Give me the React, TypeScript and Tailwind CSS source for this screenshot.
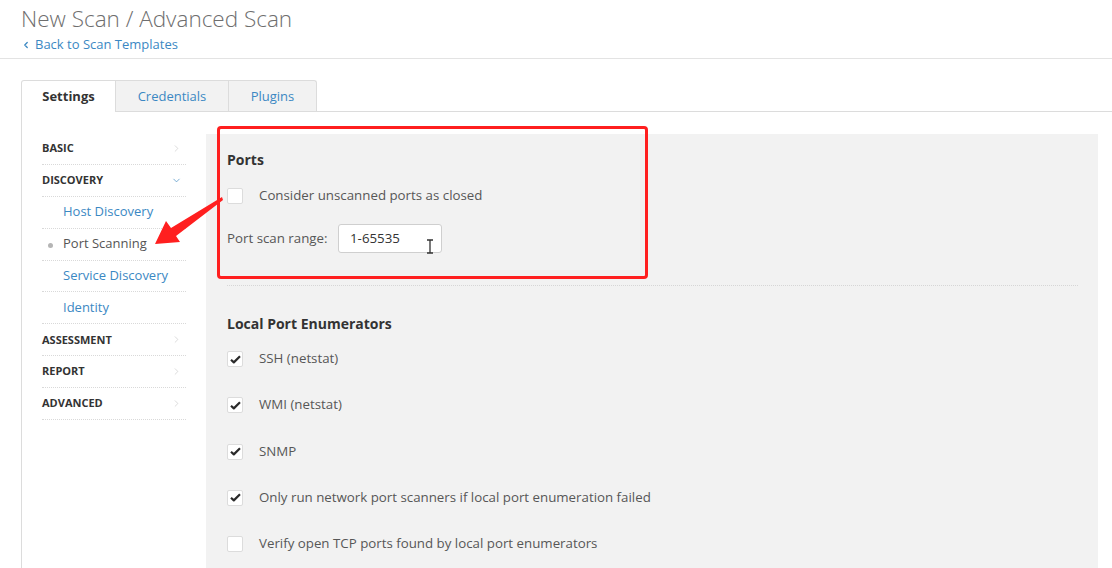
import { ChevronRight, ChevronDown, ChevronLeft } from "lucide-react";

type NavItem = {
  label: string;
  kind: "section" | "sub";
  open?: boolean;
  active?: boolean;
};

const navItems: NavItem[] = [
  { label: "Basic", kind: "section" },
  { label: "Discovery", kind: "section", open: true },
  { label: "Host Discovery", kind: "sub" },
  { label: "Port Scanning", kind: "sub", active: true },
  { label: "Service Discovery", kind: "sub" },
  { label: "Identity", kind: "sub" },
  { label: "Assessment", kind: "section" },
  { label: "Report", kind: "section" },
  { label: "Advanced", kind: "section" },
];

const enumerators = [
  { label: "SSH (netstat)", checked: true },
  { label: "WMI (netstat)", checked: true },
  { label: "SNMP", checked: true },
  { label: "Only run network port scanners if local port enumeration failed", checked: true },
  { label: "Verify open TCP ports found by local port enumerators", checked: false },
];

const Checkbox = ({ checked }: { checked: boolean }) => (
  <span className="flex h-[16px] w-[16px] shrink-0 items-center justify-center rounded-[2px] border border-[#dcdcdc] bg-white">
    {checked && (
      <svg width="11" height="9" viewBox="0 0 11 9">
        <path d="M1 4.8 L3.8 7.4 L10 1.2" fill="none" stroke="#2b2b2b" strokeWidth="2.2" strokeLinejoin="round" />
      </svg>
    )}
  </span>
);

const SideNav = () => (
  <div className="w-[144px] shrink-0">
    {navItems.map((item) =>
      item.kind === "section" ? (
        <div
          key={item.label}
          className="flex h-[31.9px] items-center justify-between border-b border-dotted border-[#d9d9d9] pr-[4px]"
        >
          <span className="text-[11px] font-bold uppercase text-[#333]">{item.label}</span>
          {item.open ? (
            <ChevronDown size={11} strokeWidth={1.6} className="text-[#4a90c4]" />
          ) : (
            <ChevronRight size={11} strokeWidth={1.4} className="text-[#c8c8c8]" />
          )}
        </div>
      ) : (
        <div
          key={item.label}
          className="relative flex h-[31.9px] items-center border-b border-dotted border-[#d9d9d9] pl-[21px]"
        >
          {item.active && (
            <span className="absolute left-[6px] top-[14px] h-[5px] w-[5px] rounded-full bg-[#b5b5b5]" />
          )}
          <span className={`text-[13px] ${item.active ? "text-[#555]" : "text-[#3b88c3]"}`}>
            {item.label}
          </span>
        </div>
      )
    )}
  </div>
);

export default function App() {
  return (
    <div
      className="relative h-[568px] w-[1112px] overflow-hidden bg-white"
      style={{ fontFamily: '"Open Sans", "Liberation Sans", sans-serif' }}
    >
      {/* header */}
      <div className="border-b border-[#e3e3e3] px-[21px] pb-[4px] pt-[4px]">
        <h1 className="text-[22.5px] font-light leading-[30px] text-[#6e6e6e]">New Scan / Advanced Scan</h1>
        <div className="mt-[2px] flex h-[18px] items-center text-[13px] text-[#3b88c3]">
          <ChevronLeft size={10} strokeWidth={3} className="mr-[4px]" />
          Back to Scan Templates
        </div>
      </div>

      {/* tabs + content */}
      <div className="flex h-[509px] flex-col pl-[21px] pt-[21px]">
        <div className="flex h-[32px] text-[13px]">
          <div className="relative z-10 flex w-[95px] items-center justify-center rounded-tl-[3px] border border-b-0 border-[#dcdcdc] bg-white font-bold text-[#333]">
            Settings
          </div>
          <div className="flex w-[113px] items-center justify-center border-t border-r border-[#dcdcdc] bg-[#f2f2f2] text-[#3b88c3]">
            Credentials
          </div>
          <div className="flex w-[88px] items-center justify-center rounded-tr-[3px] border-t border-r border-[#dcdcdc] bg-[#f2f2f2] text-[#3b88c3]">
            Plugins
          </div>
        </div>

        <div className="-mt-px flex flex-1 gap-[20px] border-l border-t border-[#dcdcdc] pl-[20px] pr-[14px] pt-[21px]">
          <SideNav />

          <div className="mt-[1px] flex-1 bg-[#f2f2f2] pl-[21px] pr-[20px] pt-[16px] text-[13.3px] text-[#575757]">
            <div className="h-[20px] text-[14px] font-bold leading-[20px] text-[#333]">Ports</div>

            <div className="mt-[16px] flex h-[20px] items-center gap-[16px]">
              <Checkbox checked={false} />
              <span>Consider unscanned ports as closed</span>
            </div>

            <div className="mt-[18px] flex h-[29px] items-center">
              <span className="w-[111px]">Port scan range:</span>
              <div className="relative flex h-[29px] w-[104px] items-center rounded-[3px] border border-[#cfcfcf] bg-white pl-[11px] text-[#333]">
                1-65535
                <svg className="absolute left-[87px] top-[14px]" width="8" height="15" viewBox="0 0 8 15">
                  <path d="M1 1 H7 M4 1 V14 M1 14 H7" stroke="#333" strokeWidth="1.3" fill="none" />
                </svg>
              </div>
            </div>

            <div className="mt-[32px] border-t border-dotted border-[#d6d6d6]" />

            <div className="mt-[28px] h-[20px] text-[14px] font-bold leading-[20px] text-[#333]">
              Local Port Enumerators
            </div>

            <div className="mt-[15px] flex flex-col gap-[26.25px]">
              {enumerators.map((e) => (
                <div key={e.label} className="flex h-[20px] items-center gap-[16px]">
                  <Checkbox checked={e.checked} />
                  <span>{e.label}</span>
                </div>
              ))}
            </div>
          </div>
        </div>
      </div>

      {/* annotation overlay */}
      <div className="pointer-events-none absolute left-[217px] top-[126px] h-[153px] w-[431px] rounded-[4px] border-[3px] border-[#ff1f1f]" />
      <svg className="pointer-events-none absolute left-[145px] top-[190px]" width="85" height="62" viewBox="0 0 85 62">
        <polygon points="10,54 21,31 26,38 77,7 78,10 31,46 35,52" fill="#ff1f1f" />
      </svg>
    </div>
  );
}
